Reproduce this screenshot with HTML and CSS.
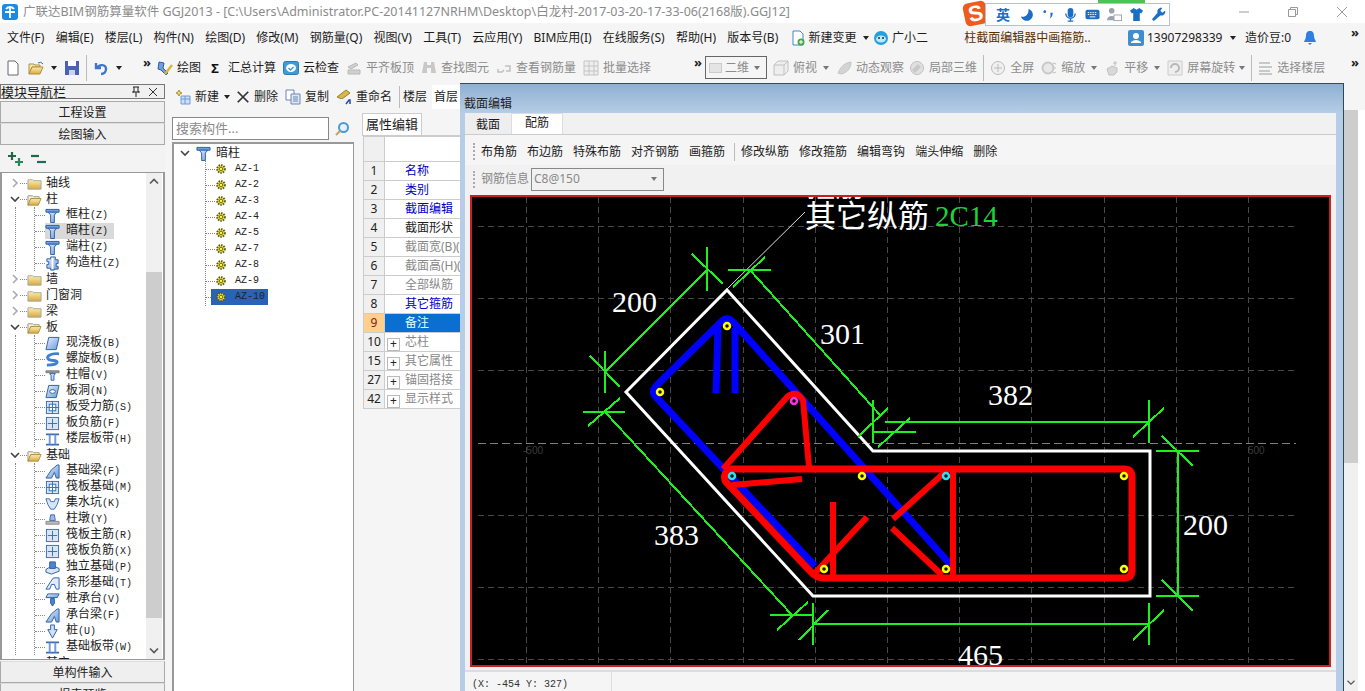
FILE: index.html
```html
<!DOCTYPE html>
<html lang="zh">
<head>
<meta charset="utf-8">
<title>广联达BIM钢筋算量软件 GGJ2013</title>
<link rel="stylesheet" href="styles.css">
</head>
<body>
<svg class="sprite" xmlns="http://www.w3.org/2000/svg">
  <defs>
    <linearGradient id="gf" x1="0" y1="0" x2="0" y2="1"><stop offset="0" stop-color="#fbeeb0"/><stop offset="1" stop-color="#d9a93f"/></linearGradient>
    <linearGradient id="gb" x1="0" y1="0" x2="1" y2="1"><stop offset="0" stop-color="#e6f0fb"/><stop offset="1" stop-color="#6d9ad6"/></linearGradient>
  </defs>
  <symbol id="chev-r" viewBox="0 0 10 10"><path d="M3 1l4 4-4 4" fill="none" stroke="#aaa" stroke-width="1.6"/></symbol>
  <symbol id="chev-d" viewBox="0 0 10 10"><path d="M1 3l4 4 4-4" fill="none" stroke="#444" stroke-width="1.6"/></symbol>
  <symbol id="folder" viewBox="0 0 16 16"><path d="M1 4h5l1 1h8v9H1z" fill="url(#gf)" stroke="#a8a8a0"/></symbol>
  <symbol id="folder-o" viewBox="0 0 16 16"><path d="M1 4h5l1 1h6v2H4l-3 7z" fill="#f4f0d8" stroke="#a09880"/><path d="M4 7h11l-3 7H1z" fill="url(#gf)" stroke="#b09040"/></symbol>
  <symbol id="col" viewBox="0 0 16 16"><path d="M1 1.500h14v3H1z" fill="#6f9fdc" stroke="#2a5ca8"/><path d="M3.500 4.500h9l-2.500 3v8H6v-8z" fill="url(#gb)" stroke="#2a5ca8"/></symbol>
  <symbol id="gz" viewBox="0 0 16 16"><path d="M6 1h5v3h3v4h-2v3h2v3h-4v1H6v-2H2V9h2V6H2V3h4z" fill="url(#gb)" stroke="#2a5ca8"/><path d="M8 2v12" stroke="#fff" stroke-width="2"/></symbol>
  <symbol id="slab" viewBox="0 0 16 16"><path d="M4 1.500h11L12 14.500H1z" fill="url(#gb)" stroke="#2a5ca8"/></symbol>
  <symbol id="spiral" viewBox="0 0 16 16"><path d="M15 2C6 1 0 5 4 8c3 2 9 0 9 3 0 2-6 3-11 3" fill="none" stroke="#3f7fd0" stroke-width="3"/></symbol>
  <symbol id="cap" viewBox="0 0 16 16"><path d="M1 3h14v2H1z" fill="#999" stroke="#777"/><path d="M5 6h6l-1.500 2v5h-3V8z" fill="#cfe0f5" stroke="#2a5ca8"/></symbol>
  <symbol id="hole" viewBox="0 0 16 16"><path d="M4 1.500h11L12 14.500H1z" fill="url(#gb)" stroke="#2a5ca8"/><ellipse cx="8" cy="8" rx="3" ry="2" fill="#fff" stroke="#2a5ca8"/></symbol>
  <symbol id="grid" viewBox="0 0 16 16"><rect x="1.500" y="1.500" width="13" height="13" fill="#d7e5f6" stroke="#3a6cb0"/><path d="M8 3v10M3 8h10" stroke="#3a6cb0"/></symbol>
  <symbol id="grid2" viewBox="0 0 16 16"><rect x="1.500" y="1.500" width="13" height="13" fill="#d7e5f6" stroke="#3a6cb0"/><rect x="4.500" y="4.500" width="7" height="7" fill="#fff" stroke="#3a6cb0"/><path d="M1 8h14M8 1v14" stroke="#3a6cb0"/></symbol>
  <symbol id="band" viewBox="0 0 16 16"><path d="M1 2.500h14M1 13.500h14" stroke="#3a6cb0" stroke-width="2"/><path d="M5 3v10M11 3v10" stroke="#6d9ad6" stroke-width="2"/></symbol>
  <symbol id="beam" viewBox="0 0 16 16"><path d="M1 15L7 6l6-5h2v14h-3l-2-6-3 6z" fill="url(#gb)" stroke="#2a5ca8"/></symbol>
  <symbol id="pit" viewBox="0 0 16 16"><path d="M1 3h4l1 3h4l1-3h4l-2 6-3 5H6L3 9z" fill="#d7e5f6" stroke="#3a6cb0"/></symbol>
  <symbol id="pier" viewBox="0 0 16 16"><path d="M6 3h4l1 6H5z" fill="#9dbce5" stroke="#3a6cb0"/><path d="M1 10h14v3H1z" fill="#bbb" stroke="#888"/></symbol>
  <symbol id="found" viewBox="0 0 16 16"><path d="M1 10l7-4 7 3v3l-8 3-6-2z" fill="#d7e5f6" stroke="#2a5ca8"/><path d="M5 2h6v7H5z" fill="#4f85cc" stroke="#2a5ca8"/></symbol>
  <symbol id="strip" viewBox="0 0 16 16"><path d="M1 14l5-8 3-4h6v12h-3l-2-5H7l-2 5z" fill="#e3edf9" stroke="#2a5ca8"/></symbol>
  <symbol id="pilecap" viewBox="0 0 16 16"><path d="M3 2h12l-2 4H1z" fill="url(#gb)" stroke="#2a5ca8"/><path d="M6 7h4v5l-2 3-2-3z" fill="#4f85cc" stroke="#2a5ca8"/></symbol>
  <symbol id="pile" viewBox="0 0 16 16"><path d="M6 1h4v5h3l-5 9-5-9h3z" fill="#cfe0f5" stroke="#2a5ca8"/></symbol>
  <symbol id="gear" viewBox="0 0 12 12"><circle cx="6" cy="6" r="3.800" fill="#fff23a" stroke="#5a5a20" stroke-width="2" stroke-dasharray="1.500 1"/><circle cx="6" cy="6" r="1.800" fill="#fff23a" stroke="#444" stroke-width=".8"/></symbol>
  <symbol id="t-new" viewBox="0 0 16 16"><path d="M3 1h7l3 3v11H3z" fill="#fff" stroke="#667"/></symbol>
  <symbol id="t-open" viewBox="0 0 16 16"><path d="M1 4h5l1 1h5v2H4l-3 7z" fill="#f5e6ad" stroke="#b09040"/><path d="M4 7h11l-3 7H1z" fill="url(#gf)" stroke="#b09040"/><path d="M10 3q3-2 5 1" fill="none" stroke="#3a6cb0"/></symbol>
  <symbol id="t-save" viewBox="0 0 16 16"><path d="M1 1h14v14H1z" fill="#4b61b4"/><path d="M4 1h8v5H4z" fill="#fff"/><path d="M5 10h6v5H5z" fill="#c9d2ef"/></symbol>
  <symbol id="t-undo" viewBox="0 0 16 16"><path d="M3 3v5h5M4 8c2-4 9-4 9 1 0 3-2 5-5 5" fill="none" stroke="#3f77c8" stroke-width="2.400"/></symbol>
  <symbol id="t-draw" viewBox="0 0 16 16"><path d="M2 2l5 1-1 5 5 5-2 2-5-5-3-1z" fill="#6f9fdc" stroke="#2a5ca8"/><path d="M15 5l-7 9" stroke="#d8b440" stroke-width="2.500"/></symbol>
  <symbol id="t-cloud" viewBox="0 0 16 16"><rect x="0.500" y="1.500" width="15" height="13" rx="2" fill="#3f9ad8" stroke="#2a7ab8"/><ellipse cx="8" cy="8" rx="5" ry="4" fill="#fff"/><path d="M5.500 8l2 2 3-3" fill="none" stroke="#3f9ad8" stroke-width="1.500"/></symbol>
  <symbol id="t-g1" viewBox="0 0 16 16"><path d="M2 7l8-4 2 2-7 4zM2 10h12v4H2z" fill="#d0d0d0" stroke="#b8b8b8"/></symbol>
  <symbol id="t-bino" viewBox="0 0 16 16"><path d="M3 2h3v3h4V2h3l2 11h-5V8H6v5H1z" fill="#c8c8c8"/></symbol>
  <symbol id="t-link" viewBox="0 0 16 16"><path d="M2 9v3h4l2-2M9 6h5v5h-4" fill="none" stroke="#c0c0c0" stroke-width="1.500"/></symbol>
  <symbol id="t-batch" viewBox="0 0 16 16"><path d="M1 1h14v14H1zM1 6h14M1 11h14M6 1v14M11 1v14" fill="#eee" stroke="#c4c4c4"/></symbol>
  <symbol id="t-cube" viewBox="0 0 16 16"><path d="M1 5l4-4h10v10l-4 4H1zM1 5h10v10M11 5l4-4" fill="#eee" stroke="#c0c0c0"/></symbol>
  <symbol id="t-orbit" viewBox="0 0 16 16"><path d="M2 13C5 6 9 3 15 2c0 6-4 11-10 12z" fill="#d4d4d4" stroke="#c4c4c4"/></symbol>
  <symbol id="t-3d" viewBox="0 0 16 16"><circle cx="8" cy="8" r="6.500" fill="#e0e0e0" stroke="#c0c0c0"/><path d="M3 10l6-6 3 3-6 6z" fill="#c8c8c8"/></symbol>
  <symbol id="t-zoom" viewBox="0 0 16 16"><circle cx="8" cy="8" r="6.500" fill="#f0f0f0" stroke="#bbb"/><path d="M8 4v8M4 8h8" stroke="#bbb"/></symbol>
  <symbol id="t-zoom2" viewBox="0 0 16 16"><circle cx="7" cy="8" r="5.500" fill="#e8e8e8" stroke="#c8c8c8" stroke-width="2"/><path d="M12 3l3 1M13 8h2M12 13l3-1" stroke="#c0c0c0"/></symbol>
  <symbol id="t-pan" viewBox="0 0 16 16"><path d="M3 9l5-3 5 2v4l-3 3H5zM11 1v5M9 3h4" fill="#d8d8d8" stroke="#c0c0c0"/></symbol>
  <symbol id="t-rot" viewBox="0 0 16 16"><path d="M1 1h14v14H1z" fill="#eee" stroke="#ccc"/><path d="M4 8a4 4 0 1 1 4 4" fill="none" stroke="#b8b8b8" stroke-width="2"/></symbol>
  <symbol id="t-layers" viewBox="0 0 16 16"><path d="M2 3h11M2 7h13M2 11h11M2 14h13" stroke="#c8c8c8" stroke-width="2"/></symbol>
  <symbol id="s-new" viewBox="0 0 16 16"><path d="M4 1l1 2 2 1-2 1-1 2-1-2-2-1 2-1z" fill="#f3d95a" stroke="#b09040"/><path d="M6 7h9v8H6z" fill="#cfe0f5" stroke="#6d9ad6"/><path d="M6 10h9M10 7v8" stroke="#6d9ad6"/></symbol>
  <symbol id="s-x" viewBox="0 0 16 16"><path d="M2 2l12 12M14 2L2 14" stroke="#333" stroke-width="2"/></symbol>
  <symbol id="s-copy" viewBox="0 0 16 16"><path d="M1 1h8v10H1z" fill="#fff" stroke="#6d88b0"/><path d="M6 5h9v10H6z" fill="#dbe7f5" stroke="#6d88b0"/><path d="M8 8h5M8 10h5M8 12h5" stroke="#6d88b0"/></symbol>
  <symbol id="s-ren" viewBox="0 0 16 16"><path d="M1 8l9-7 4 3-8 6z" fill="#d9b84a" stroke="#98802c"/><path d="M2 10h13v5H2z" fill="#eef3fa"/><path d="M10 15l3-4h1v4" fill="none" stroke="#2a4ca8" stroke-width="1.500"/></symbol>
  <symbol id="plus2" viewBox="0 0 18 16"><path d="M5 1v8M1 5h8" stroke="#23664a" stroke-width="2.200"/><path d="M12 7v8M8 11h8" stroke="#1f8a5a" stroke-width="2.200"/></symbol>
  <symbol id="minus2" viewBox="0 0 18 16"><path d="M1 5h8" stroke="#23664a" stroke-width="2.200"/><path d="M7 11h9" stroke="#1f6a5a" stroke-width="2.200"/></symbol>
</svg>

<header class="titlebar">
  <svg class="appicon" viewBox="0 0 16 16"><rect width="16" height="16" rx="3" fill="#1a8ae2"/><path d="M8 2v12M3 8h10M4 5a5 5 0 0 1 8 0" fill="none" stroke="#fff" stroke-width="1.800"/></svg>
  <span class="title-text">广联达BIM钢筋算量软件 GGJ2013 - [C:\Users\Administrator.PC-20141127NRHM\Desktop\白龙村-2017-03-20-17-33-06(2168版).GGJ12]</span>
  <div class="winbtns">
    <svg class="winbtn" viewBox="0 0 12 12"><path d="M1 6h10" stroke="#999"/></svg>
    <svg class="winbtn" viewBox="0 0 12 12"><path d="M1.500 3.500h7v7h-7zM3.500 3.500v-2h7v7h-2" fill="none" stroke="#999"/></svg>
    <svg class="winbtn" viewBox="0 0 12 12"><path d="M1 1l10 10M11 1L1 11" stroke="#999"/></svg>
  </div>
</header>

<nav class="menubar">
  <span>文件(F)</span><span>编辑(E)</span><span>楼层(L)</span><span>构件(N)</span><span>绘图(D)</span><span>修改(M)</span><span>钢筋量(Q)</span><span>视图(V)</span><span>工具(T)</span><span>云应用(Y)</span><span>BIM应用(I)</span><span>在线服务(S)</span><span>帮助(H)</span><span>版本号(B)</span>
  <span class="menu-ic"><svg class="ic16" viewBox="0 0 16 16"><path d="M3 1h7l3 3v11H3z" fill="#fff" stroke="#3a8ad0"/><circle cx="11" cy="12" r="3.500" fill="#45a845"/><path d="M11 10v4M9 12h4" stroke="#fff"/></svg>新建变更</span>
  <span class="caret dark mc1"></span>
  <span class="menu-ic"><svg class="ic16" viewBox="0 0 16 16"><circle cx="8" cy="8" r="7" fill="#24a0de"/><ellipse cx="8" cy="9" rx="5" ry="3.500" fill="#bfe8fb"/><circle cx="6" cy="8" r="1" fill="#135"/><circle cx="10" cy="8" r="1" fill="#135"/></svg>广小二</span>
  <span class="news">柱截面编辑器中画箍筋..</span>
  <span class="menu-ic user"><svg class="ic16" viewBox="0 0 16 16"><rect width="16" height="16" rx="2" fill="#3f8fce"/><circle cx="8" cy="6" r="3" fill="#fff"/><path d="M3 13h10v-1q-5-4-10 0z" fill="#fff"/></svg>13907298339</span>
  <span class="caret dark mc2"></span>
  <span>造价豆:0</span>
  <svg class="ic16" viewBox="0 0 16 16"><path d="M8 1c3 0 4 2 4 5 0 3 2 5 2 6H2c0-1 2-3 2-6 0-3 1-5 4-5z" fill="#2f7fe0"/><path d="M6 13h4l-2 2z" fill="#2f7fe0"/></svg>
  <span class="more end">»</span>
</nav>

<div class="toolbar">
  <svg class="ic16 tight" viewBox="0 0 16 16"><use href="#t-new"/></svg>
  <svg class="ic16 tight" viewBox="0 0 16 16"><use href="#t-open"/></svg><span class="caret dark"></span>
  <svg class="ic16 tight" viewBox="0 0 16 16"><use href="#t-save"/></svg>
  <i class="sep"></i>
  <svg class="ic16 tight" viewBox="0 0 16 16"><use href="#t-undo"/></svg><span class="caret dark"></span>
  <span class="more mid">»</span>
  <span class="tb"><svg class="ic16"><use href="#t-draw"/></svg>绘图</span>
  <span class="tb sig"><b class="sigma">Σ</b>汇总计算</span>
  <span class="tb"><svg class="ic16"><use href="#t-cloud"/></svg>云检查</span>
  <span class="tb off"><svg class="ic16"><use href="#t-g1"/></svg>平齐板顶</span>
  <span class="tb off"><svg class="ic16"><use href="#t-bino"/></svg>查找图元</span>
  <span class="tb off"><svg class="ic16"><use href="#t-link"/></svg>查看钢筋量</span>
  <span class="tb off"><svg class="ic16"><use href="#t-batch"/></svg>批量选择</span>
  <span class="more far">»</span>
  <span class="combo2d"><i class="swatch"></i>二维<span class="caret"></span></span>
  <span class="tb off"><svg class="ic16"><use href="#t-cube"/></svg>俯视<span class="caret"></span></span>
  <span class="tb off"><svg class="ic16"><use href="#t-orbit"/></svg>动态观察</span>
  <span class="tb off nudge"><svg class="ic16"><use href="#t-3d"/></svg>局部三维</span>
  <i class="sep"></i>
  <span class="tb off"><svg class="ic16"><use href="#t-zoom"/></svg>全屏</span>
  <span class="tb off"><svg class="ic16"><use href="#t-zoom2"/></svg>缩放<span class="caret"></span></span>
  <span class="tb off"><svg class="ic16"><use href="#t-pan"/></svg>平移<span class="caret"></span></span>
  <span class="tb off"><svg class="ic16"><use href="#t-rot"/></svg>屏幕旋转<span class="caret narrow"></span></span>
  <i class="sep"></i>
  <span class="tb off nudge1"><svg class="ic16"><use href="#t-layers"/></svg>选择楼层</span>
  <span class="more end">»</span>
</div>

<main class="workspace">
  <aside class="navpane">
    <div class="navhead"><span>模块导航栏</span><svg class="navhead-ic" viewBox="0 0 12 12"><path d="M3 1h6M4 1v5H2.500h7H8V1M6 6v5" fill="none" stroke="#222"/></svg><svg class="navhead-ic" viewBox="0 0 12 12"><path d="M2 2l8 8M10 2l-8 8" stroke="#333"/></svg></div>
    <div class="navbtn first">工程设置</div>
    <div class="navbtn">绘图输入</div>
    <div class="navtools"><svg class="plusm"><use href="#plus2"/></svg><svg class="plusm"><use href="#minus2"/></svg></div>
    <div class="navtree">
      <div class="treescroll">
        <div class="r"><svg class="chev"><use href="#chev-r"/></svg><i class="stub"></i><svg class="ic15"><use href="#folder"/></svg><span class="lb">轴线</span></div>
        <div class="r"><svg class="chev"><use href="#chev-d"/></svg><i class="stub"></i><svg class="ic15"><use href="#folder-o"/></svg><span class="lb">柱</span></div>
        <div class="grp"><div class="kids">
          <div class="k"><i class="kstub"></i><svg class="ic15"><use href="#col"/></svg><span class="kl">框柱<span class="l">(Z)</span></span></div>
          <div class="k"><i class="kstub"></i><span class="hitw"><svg class="ic15"><use href="#col"/></svg><span class="kl">暗柱<span class="l">(Z)</span></span></span></div>
          <div class="k"><i class="kstub"></i><svg class="ic15"><use href="#col"/></svg><span class="kl">端柱<span class="l">(Z)</span></span></div>
          <div class="k"><i class="kstub"></i><svg class="ic15"><use href="#gz"/></svg><span class="kl">构造柱<span class="l">(Z)</span></span></div>
        </div></div>
        <div class="r"><svg class="chev"><use href="#chev-r"/></svg><i class="stub"></i><svg class="ic15"><use href="#folder"/></svg><span class="lb">墙</span></div>
        <div class="r"><svg class="chev"><use href="#chev-r"/></svg><i class="stub"></i><svg class="ic15"><use href="#folder"/></svg><span class="lb">门窗洞</span></div>
        <div class="r"><svg class="chev"><use href="#chev-r"/></svg><i class="stub"></i><svg class="ic15"><use href="#folder"/></svg><span class="lb">梁</span></div>
        <div class="r"><svg class="chev"><use href="#chev-d"/></svg><i class="stub"></i><svg class="ic15"><use href="#folder-o"/></svg><span class="lb">板</span></div>
        <div class="grp"><div class="kids">
          <div class="k"><i class="kstub"></i><svg class="ic15"><use href="#slab"/></svg><span class="kl">现浇板<span class="l">(B)</span></span></div>
          <div class="k"><i class="kstub"></i><svg class="ic15"><use href="#spiral"/></svg><span class="kl">螺旋板<span class="l">(B)</span></span></div>
          <div class="k"><i class="kstub"></i><svg class="ic15"><use href="#cap"/></svg><span class="kl">柱帽<span class="l">(V)</span></span></div>
          <div class="k"><i class="kstub"></i><svg class="ic15"><use href="#hole"/></svg><span class="kl">板洞<span class="l">(N)</span></span></div>
          <div class="k"><i class="kstub"></i><svg class="ic15"><use href="#grid2"/></svg><span class="kl">板受力筋<span class="l">(S)</span></span></div>
          <div class="k"><i class="kstub"></i><svg class="ic15"><use href="#grid"/></svg><span class="kl">板负筋<span class="l">(F)</span></span></div>
          <div class="k"><i class="kstub"></i><svg class="ic15"><use href="#band"/></svg><span class="kl">楼层板带<span class="l">(H)</span></span></div>
        </div></div>
        <div class="r"><svg class="chev"><use href="#chev-d"/></svg><i class="stub"></i><svg class="ic15"><use href="#folder-o"/></svg><span class="lb">基础</span></div>
        <div class="grp"><div class="kids">
          <div class="k"><i class="kstub"></i><svg class="ic15"><use href="#beam"/></svg><span class="kl">基础梁<span class="l">(F)</span></span></div>
          <div class="k"><i class="kstub"></i><svg class="ic15"><use href="#grid2"/></svg><span class="kl">筏板基础<span class="l">(M)</span></span></div>
          <div class="k"><i class="kstub"></i><svg class="ic15"><use href="#pit"/></svg><span class="kl">集水坑<span class="l">(K)</span></span></div>
          <div class="k"><i class="kstub"></i><svg class="ic15"><use href="#pier"/></svg><span class="kl">柱墩<span class="l">(Y)</span></span></div>
          <div class="k"><i class="kstub"></i><svg class="ic15"><use href="#grid"/></svg><span class="kl">筏板主筋<span class="l">(R)</span></span></div>
          <div class="k"><i class="kstub"></i><svg class="ic15"><use href="#grid"/></svg><span class="kl">筏板负筋<span class="l">(X)</span></span></div>
          <div class="k"><i class="kstub"></i><svg class="ic15"><use href="#found"/></svg><span class="kl">独立基础<span class="l">(P)</span></span></div>
          <div class="k"><i class="kstub"></i><svg class="ic15"><use href="#strip"/></svg><span class="kl">条形基础<span class="l">(T)</span></span></div>
          <div class="k"><i class="kstub"></i><svg class="ic15"><use href="#pilecap"/></svg><span class="kl">桩承台<span class="l">(V)</span></span></div>
          <div class="k"><i class="kstub"></i><svg class="ic15"><use href="#beam"/></svg><span class="kl">承台梁<span class="l">(F)</span></span></div>
          <div class="k"><i class="kstub"></i><svg class="ic15"><use href="#pile"/></svg><span class="kl">桩<span class="l">(U)</span></span></div>
          <div class="k"><i class="kstub"></i><svg class="ic15"><use href="#band"/></svg><span class="kl">基础板带<span class="l">(W)</span></span></div>
        </div></div>
        <div class="r"><svg class="chev"><use href="#chev-r"/></svg><i class="stub"></i><svg class="ic15"><use href="#folder"/></svg><span class="lb">其它</span></div>
      </div>
      <div class="vbar">
        <svg class="vbar-arrow" viewBox="0 0 16 16"><path d="M4 10l4-4 4 4" fill="none" stroke="#555" stroke-width="1.600"/></svg>
        <div class="vbar-gap"></div>
        <div class="vbar-thumb"></div>
        <div class="vbar-rest"></div>
        <svg class="vbar-arrow" viewBox="0 0 16 16"><path d="M4 6l4 4 4-4" fill="none" stroke="#555" stroke-width="1.600"/></svg>
      </div>
    </div>
    <div class="navbtn bottom">单构件输入</div>
    <div class="navbtn">报表预览</div>
  </aside>

  <section class="panel">
    <div class="subtools">
      <span class="tb"><svg class="ic16"><use href="#s-new"/></svg>新建</span><span class="caret dark tightcaret"></span>
      <span class="tb gapx"><svg class="ic16 ic-x"><use href="#s-x"/></svg>删除</span>
      <span class="tb"><svg class="ic16"><use href="#s-copy"/></svg>复制</span>
      <span class="tb"><svg class="ic16"><use href="#s-ren"/></svg>重命名</span>
      <i class="sep short"></i>
      <span>楼层</span>
      <span class="floor">首层</span>
    </div>
    <div class="panel-body">
      <div class="listcol">
        <div class="searchrow">
          <div class="searchbox">搜索构件...</div>
          <svg class="searchic" viewBox="0 0 16 16"><circle cx="9.500" cy="6.500" r="4.500" fill="#e6f2fb" stroke="#4a9ad4" stroke-width="2"/><path d="M6 10l-4 4" stroke="#c9a560" stroke-width="2.200"/></svg>
        </div>
        <div class="comptree">
          <div class="croot"><svg class="chev"><use href="#chev-d"/></svg><svg class="ic15 crooticon"><use href="#col"/></svg><span>暗柱</span></div>
          <div class="ckids">
            <div class="c"><i class="cstub"></i><svg class="gearic"><use href="#gear"/></svg><span class="cl">AZ-1</span></div>
            <div class="c"><i class="cstub"></i><svg class="gearic"><use href="#gear"/></svg><span class="cl">AZ-2</span></div>
            <div class="c"><i class="cstub"></i><svg class="gearic"><use href="#gear"/></svg><span class="cl">AZ-3</span></div>
            <div class="c"><i class="cstub"></i><svg class="gearic"><use href="#gear"/></svg><span class="cl">AZ-4</span></div>
            <div class="c"><i class="cstub"></i><svg class="gearic"><use href="#gear"/></svg><span class="cl">AZ-5</span></div>
            <div class="c"><i class="cstub"></i><svg class="gearic"><use href="#gear"/></svg><span class="cl">AZ-7</span></div>
            <div class="c"><i class="cstub"></i><svg class="gearic"><use href="#gear"/></svg><span class="cl">AZ-8</span></div>
            <div class="c"><i class="cstub"></i><svg class="gearic"><use href="#gear"/></svg><span class="cl">AZ-9</span></div>
            <div class="c sel"><i class="cstub"></i><div class="selbox"><svg class="gearic"><use href="#gear"/></svg><span class="cl">AZ-10</span></div></div>
          </div>
        </div>
      </div>
      <div class="propcol">
        <div class="proptab"><span class="tabon">属性编辑</span></div>
        <table class="prop">
          <tr class="phead"><th></th><td></td></tr>
          <tr><th>1</th><td class="blue">名称</td></tr>
          <tr><th>2</th><td class="blue">类别</td></tr>
          <tr><th>3</th><td class="blue">截面编辑</td></tr>
          <tr><th>4</th><td>截面形状</td></tr>
          <tr><th>5</th><td class="grey">截面宽(B)(mm)</td></tr>
          <tr><th>6</th><td class="grey">截面高(H)(mm)</td></tr>
          <tr><th>7</th><td class="grey">全部纵筋</td></tr>
          <tr><th>8</th><td class="blue">其它箍筋</td></tr>
          <tr class="cur"><th>9</th><td>备注</td></tr>
          <tr><th>10</th><td class="grey pl"><i class="plus">+</i>芯柱</td></tr>
          <tr><th>15</th><td class="grey pl"><i class="plus">+</i>其它属性</td></tr>
          <tr><th>27</th><td class="grey pl"><i class="plus">+</i>锚固搭接</td></tr>
          <tr><th>42</th><td class="grey pl"><i class="plus">+</i>显示样式</td></tr>
        </table>
      </div>
      <div class="rightstrip">
        <div class="rs-thumb"></div>
        <div class="rs-rest"></div>
        <svg class="rs-arrow" viewBox="0 0 16 16"><path d="M4 6l4 4 4-4" fill="none" stroke="#555" stroke-width="1.400"/></svg>
      </div>
    </div>
  </section>
</main>

<section class="dialog">
  <div class="dlg-title">截面编辑</div>
  <div class="dlg-body">
    <div class="tabs"><span class="t">截面</span><span class="t active">配筋</span></div>
    <div class="dlg-tools">
      <i class="grip"></i>
      <span>布角筋</span><span>布边筋</span><span>特殊布筋</span><span>对齐钢筋</span><span>画箍筋</span>
      <i class="sep tall"></i>
      <span>修改纵筋</span><span>修改箍筋</span><span>编辑弯钩</span><span>端头伸缩</span><span>删除</span>
    </div>
    <div class="dlg-tools second">
      <i class="grip"></i>
      <span class="greyl">钢筋信息</span>
      <span class="combo">C8@150<span class="caret"></span></span>
    </div>
    <div class="canvas">
      <svg class="cad" viewBox="472 197 857 468" xmlns="http://www.w3.org/2000/svg">
        <path class="gridl" d="M526 197V665M598 197V665M670 197V665M743 197V665M815 197V665M887 197V665M959 197V665M1031 197V665M1104 197V665M1176 197V665M1248 197V665M478 226H1296M478 298H1296M478 370H1296M478 515H1296M478 587H1296M478 659H1296"/>
        <path class="gridm" d="M478 443H1296"/>
        <text class="gt" x="523" y="454">-500</text>
        <text class="gt" x="1248" y="454">500</text>

        <path class="wall" d="M727 290L873 451H1150V596H813L626 392Z"/>
        <path class="leader" d="M727 289L805 212"/>

        <path class="dim" d="M605 372L707 270M707 247V291M692 254L723 284M605 351V393M590 356L620 387"/>
        <path class="dim" d="M750 270L880 415M728 270H771M733 287L765 257M873 400V443M858 437L888 408"/>
        <path class="dim" d="M605 412L792 615M583 412H625M588 426L620 398M770 615H813M777 630L808 602"/>
        <path class="dim" d="M813 624H1149M813 603V645M799 640L828 610M1149 603V645M1133 640L1164 610"/>
        <path class="dim" d="M1178 451V596M1156 451H1199M1162 436L1193 466M1156 596H1199M1162 580L1193 611"/>
        <path class="dim" d="M885 422H1149M872 432H916M878 447L910 418M1149 400V443M1133 437L1164 408"/>

        <path class="blue-bar" d="M716 393L718 328M735 393V328M656 386L721 322Q727 316 733 322L950 564M656 386Q651 392 656 397L815 566"/>
        <path class="red-bar" d="M729 469H1124Q1132 469 1132 477V570Q1132 578 1124 578H824Q816 578 811 572L726 482Q722 476 729 469Z"/>
        <path class="red-hook" d="M732 485L802 479M723 469L787 397Q796 389 803 400L809 467"/>
        <path class="red-hook" d="M833 502V575M815 573L867 517M953 472V575M945 472L893 519M942 575L892 528"/>

        <circle class="dy" cx="727" cy="326" r="3"/>
        <circle class="dy" cx="660" cy="392" r="3"/>
        <circle class="dm" cx="794" cy="401" r="3"/>
        <circle class="dc" cx="732" cy="476" r="3"/>
        <circle class="dy" cx="862" cy="476" r="3"/>
        <circle class="dc" cx="946" cy="476" r="3"/>
        <circle class="dy" cx="1124" cy="476" r="3"/>
        <circle class="dy" cx="824" cy="569" r="3"/>
        <circle class="dy" cx="946" cy="569" r="3"/>
        <circle class="dy" cx="1124" cy="569" r="3"/>

        <text class="lbl" x="806" y="197">箍筋</text>
        <text class="lbl big" x="805" y="227">其它纵筋</text>
        <text class="lbl-g" x="935" y="226">2C14</text>
        <text class="num" x="612" y="312">200</text>
        <text class="num" x="820" y="344">301</text>
        <text class="num" x="988" y="405">382</text>
        <text class="num" x="1183" y="535">200</text>
        <text class="num" x="654" y="545">383</text>
        <text class="num" x="958" y="665">465</text>
      </svg>
    </div>
    <div class="statusbar"><span class="coord">(X: -454 Y: 327)</span><span class="stat2"></span></div>
  </div>
</section>

<div class="ime">
  <span class="ime-s">S</span>
  <div class="ime-bar">
    <b class="ime-en">英</b>
    <svg class="ime-ic" viewBox="0 0 16 16"><path d="M10 2a6.500 6.500 0 1 1-8 8c4 2 9-2 8-8z" fill="#1a6fc4"/></svg>
    <svg class="ime-ic" viewBox="0 0 16 16"><circle cx="4" cy="5" r="1.500" fill="#1a6fc4"/><path d="M10 6h2.500c0 3-1 5-3 6 .8-2 .8-3.500.5-6z" fill="#1a6fc4"/></svg>
    <svg class="ime-ic" viewBox="0 0 16 16"><rect x="5" y="1" width="6" height="10" rx="3" fill="#1a6fc4"/><path d="M3 7a5 5 0 0 0 10 0M8 12v3M5 15h6" fill="none" stroke="#1a6fc4" stroke-width="1.400"/></svg>
    <svg class="ime-ic" viewBox="0 0 16 16"><rect x="0.500" y="3" width="15" height="10" rx="2" fill="#1a6fc4"/><path d="M3 6h10M3 8h10" stroke="#fff" stroke-dasharray="1.500 1"/><path d="M5 10.500h6" stroke="#fff"/></svg>
    <svg class="ime-ic" viewBox="0 0 16 16"><circle cx="5" cy="4" r="3" fill="#9aa3ad"/><path d="M0 14c0-6 10-6 10 0z" fill="#9aa3ad"/><rect x="7.500" y="8.500" width="8" height="6" fill="#fff" stroke="#9aa3ad"/></svg>
    <svg class="ime-ic" viewBox="0 0 16 16"><path d="M5 1L1 4l2 3 1.500-1v9h7V6L13 7l2-3-4-3-3 2z" fill="#1a6fc4"/></svg>
    <svg class="ime-ic" viewBox="0 0 16 16"><path d="M15 4l-3 2-2-2 2-3c-3-1-6 2-5 5l-6 7 2 2 7-6c3 1 6-2 5-5z" fill="#1a6fc4"/></svg>
  </div>
  <i class="ime-green"></i>
</div>
</body>
</html>
```
FILE: styles.css
```css
* { box-sizing: border-box; }
html, body { margin: 0; padding: 0; }
body {
  width: 1365px; height: 691px; overflow: hidden; position: relative;
  background: #f5f5f5; color: #1c1c1c;
  font: 12px/16px "Noto Sans", "Noto Sans CJK SC", sans-serif;
}
i { font-style: normal; display: block; }
.sprite { position: absolute; width: 0; height: 0; }
.ic16 { width: 16px; height: 16px; flex: none; display: block; }
.ic15 { width: 15px; height: 15px; flex: none; display: block; }

.titlebar { height: 23px; background: #fff; display: flex; align-items: center; padding-left: 2px; }
.appicon { width: 16px; height: 16px; flex: none; }
.title-text { margin-left: 5px; color: #8b8b8b; font-size: 12.5px; white-space: nowrap; }
.winbtns { margin-left: auto; display: flex; gap: 37px; padding-right: 17px; align-items: center; }
.winbtn { width: 12px; height: 12px; display: block; }

.menubar { height: 30px; display: flex; align-items: center; padding-left: 7px; gap: 11.25px; white-space: nowrap; position: relative; }
.menu-ic { display: flex; align-items: center; gap: 3px; }
.mc1 { margin: 0 -7px 0 -5px; }
.mc2 { margin: 0 -2px 0 -4px; }
.news { color: #5a3000; margin-left: 25px; }
.user { margin-left: 26px; }
.caret { width: 0; height: 0; flex: none; display: inline-block; border: 3px solid transparent; border-top: 4px solid #777; border-bottom: 0; }
.caret.dark { border-top-color: #222; }
.more { font-weight: bold; font-size: 13px; line-height: 10px; align-self: flex-start; margin-top: 4px; color: #222; }
.more.end { position: absolute; left: 1351px; }

.toolbar { height: 31px; display: flex; align-items: center; padding: 0 0 2px 5px; gap: 7px; white-space: nowrap; position: relative; }
.sep { width: 1px; height: 26px; background: #bbb; flex: none; margin: 0 -1px; }
.sep.short { height: 22px; margin: 0 -4px 0 0; }
.sep.tall { height: 18px; margin: 0 -4px 0 -1px; }
.tb { display: flex; align-items: center; gap: 4px; flex: none; }
.tb .caret { margin-left: 2px; }
.tb .caret.narrow { margin-left: 0; }
.off { color: #8c8c8c; }
.sigma { font-size: 13px; width: 10px; margin-right: 4px; color: #111; text-align: center; }
.sig { margin-left: 2px; }
.nudge { margin-left: -2px; }
.nudge1 { margin-left: -1px; }
.more.mid { margin-left: 14px; margin-right: -1px; }
.more.far { margin-left: 36px; margin-right: -4px; }
.combo2d { width: 62px; height: 23px; border: 1px solid #666; display: flex; align-items: center; gap: 3px; padding-left: 3px; color: #8c8c8c; flex: none; background: #f5f5f5; margin-right: -1px; }
.swatch { width: 13px; height: 10px; background: #e4e4e4; border: 1px solid #ccc; }
.combo2d .caret { margin-left: 2px; }

.workspace { height: 607px; display: flex; }
.navpane { width: 165px; flex: none; display: flex; flex-direction: column; }
.navhead { height: 15px; border: 1px solid #777; display: flex; align-items: center; font-size: 13px; white-space: nowrap; background: #f0f0f0; margin-bottom: 2px; }
.navhead span { margin-right: auto; }
.navhead-ic { width: 12px; height: 12px; margin-right: 5px; flex: none; }
.navbtn { height: 22px; flex: none; background: #efefef; border: 1px solid #aaa; border-top-color: #ddd; display: flex; align-items: center; justify-content: center; color: #222; padding-top: 1px; }
.navbtn.first { border-top-color: #aaa; }
.navbtn.bottom { margin-top: 1px; }
.navtools { height: 27px; flex: none; display: flex; align-items: center; gap: 5px; padding-left: 7px; background: #f3f3f3; }
.plusm { width: 18px; height: 16px; display: block; }
.navtree { height: 488px; flex: none; display: flex; background: #fff; border: 1px solid #999; border-width: 1px 2px 1px 2px; overflow: hidden; }
.treescroll { flex: 1; overflow: hidden; padding-top: 2px; min-width: 0; }
.r { height: 16px; display: flex; align-items: center; padding-left: 8px; }
.chev { width: 10px; height: 10px; flex: none; }
.stub { width: 7px; flex: none; border-top: 1px dotted #888; }
.lb { margin-left: 4px; }
.grp { margin-left: 13px; border-left: 1px dotted #888; }
.kids { margin-left: 18px; border-left: 1px dotted #888; }
.k { height: 16px; display: flex; align-items: center; white-space: nowrap; }
.kstub { width: 10px; flex: none; border-top: 1px dotted #888; }
.kl { margin-left: 4px; padding: 0 2px; line-height: 16px; }
.hitw { display: flex; align-items: center; background: #d9d9d9; height: 16px; padding-right: 4px; }
.l { font-family: "Liberation Mono", monospace; font-size: 10px; color: #222; }
.vbar { width: 16px; flex: none; display: flex; flex-direction: column; background: #f0f0f0; margin-right: 1px; }
.vbar-arrow { width: 16px; height: 17px; flex: none; display: block; }
.vbar-gap { height: 82px; flex: none; }
.vbar-thumb { height: 346px; flex: none; background: #cdcdcd; }
.vbar-rest { flex: 1; }

.panel { flex: 1; margin-left: 7px; min-width: 0; display: flex; flex-direction: column; }
.subtools { height: 26px; flex: none; display: flex; align-items: center; gap: 7px; padding-left: 3px; white-space: nowrap; }
.ic-x { width: 14px; }
.tightcaret { margin-left: -2px; }
.gapx { margin-left: -1px; }
.floor { background: #fff; padding: 4px 6px 4px 2px; margin-left: -2px; }
.panel-body { flex: 1; display: flex; min-height: 0; }
.listcol { width: 182px; flex: none; display: flex; flex-direction: column; padding-top: 7px; }
.searchrow { height: 25px; flex: none; display: flex; align-items: flex-start; }
.searchbox { width: 157px; height: 23px; border: 1px solid #888; background: #fff; padding-left: 3px; line-height: 21px; color: #8a8a8a; font-size: 13px; }
.searchic { width: 16px; height: 16px; margin: 4px 0 0 5px; }
.comptree { flex: 1; background: #fff; border: 2px solid #999; border-bottom: 0; border-right: 1px solid #999; padding-top: 1px; }
.croot { height: 16px; display: flex; align-items: center; padding-left: 6px; }
.crooticon { margin-left: 6px; margin-right: 5px; }
.ckids { margin-left: 31px; border-left: 1px dotted #888; margin-top: 0; height: 145px; }
.c { height: 16px; display: flex; align-items: center; }
.cstub { width: 9px; flex: none; border-top: 1px dotted #888; }
.gearic { width: 12px; height: 12px; flex: none; display: block; }
.cl { margin-left: 8px; font-family: "Liberation Mono", monospace; font-size: 10px; color: #222; }
.selbox { display: flex; align-items: center; width: 57px; height: 16px; background: #2a62b8; padding-left: 4px; margin-left: -4px; }
.propcol { flex: 1; margin-left: 8px; min-width: 0; background: #f5f5f5; margin-top: 3px; }
.proptab { height: 23px; border-bottom: 1px solid #ccc; display: flex; }
.tabon { width: 60px; height: 22px; background: #fff; border: 1px solid #ccc; border-bottom: 0; display: block; text-align: center; line-height: 20px; font-size: 13px; }
.prop { border-collapse: collapse; margin-left: 1px; width: calc(100% - 1px); background: #fff; table-layout: fixed; }
.prop tr { height: 19px; }
.prop tr.phead { height: 25px; }
.prop th { width: 21px; background: #f0f0f0; border: 1px solid #ccc; font-weight: normal; padding: 0; color: #222; }
.prop td { border: 1px solid #ccc; padding: 0 0 0 20px; white-space: nowrap; overflow: hidden; line-height: 16px; }
.prop td.blue { color: #0000c8; }
.prop td.grey { color: #888; }
.prop td.pl { padding-left: 2px; }
.plus { display: inline-block; width: 13px; height: 13px; border: 1px solid #bbb; color: #222; line-height: 10px; text-align: center; margin-right: 5px; vertical-align: -2px; }
.cur th { background: #ffcf8c; color: #802020; }
.cur td { background: #0a6fd1; color: #dff; }
.rightstrip { width: 21px; flex: none; background: #fff; display: flex; flex-direction: column; margin-left: 0; }
.rs-thumb { height: 353px; background: #cdcdcd; flex: none; margin-right: 7px; }
.rs-rest { flex: 1; background: #f0f0f0; margin-right: 7px; }
.rs-arrow { width: 14px; height: 17px; display: block; background: #f0f0f0; }

.dialog { position: absolute; left: 460px; top: 83px; width: 884px; height: 608px; border-top: 1px solid #3c4a50; border-right: 1px solid #2c4a50; display: flex; flex-direction: column; background: #b5cde6; }
.dlg-title { height: 29px; flex: none; background: linear-gradient(#8fb0d2, #b5cde6); padding: 12px 0 0 4px; font-size: 12px; line-height: 16px; color: #222; }
.dlg-body { flex: 1; margin: 0 7px 0 5px; background: #f1f1f1; display: flex; flex-direction: column; min-height: 0; }
.tabs { height: 22px; flex: none; display: flex; border-bottom: 1px solid #ccc; background: #f1f1f1; }
.t { width: 47px; text-align: center; line-height: 24px; font-size: 12px; border-right: 1px solid #ddd; background: #eee; }
.t.active { width: 51px; background: #fff; line-height: 17px; border: 1px solid #ddd; border-bottom: 0; border-left: 0; }
.dlg-tools { height: 30px; flex: none; display: flex; align-items: center; gap: 10px; padding: 3px 0 0 8px; background: #f5f5f5; white-space: nowrap; }
.dlg-tools.second { height: 30px; gap: 2px; padding: 0 0 2px 8px; background: #f1f1f1; }
.grip { width: 1px; height: 17px; border-left: 2px dotted #aaa; margin-right: -4px; }
.dlg-tools.second .grip { margin-right: 4px; }
.greyl { color: #888; }
.combo { width: 133px; height: 23px; border: 1px solid #888; color: #888; display: flex; align-items: center; padding-left: 2px; justify-content: space-between; padding-right: 6px; background: #f1f1f1; }
.canvas { height: 472px; flex: none; margin: 0 5px; border: 2px solid #cc2020; background: #000; overflow: hidden; }
.cad { display: block; width: 857px; height: 468px; }
.statusbar { flex: 1; display: flex; border-top: 2px solid #ddd; margin-top: 3px; background: #f5f5f5; }
.coord { width: 147px; padding: 3px 0 0 7px; border-right: 1px solid #ddd; line-height: 20px; color: #333; font-family: "Liberation Mono", monospace; font-size: 10px; }
.stat2 { flex: 1; }

.gridl { stroke: #484848; stroke-width: 1; stroke-dasharray: 6 4; fill: none; shape-rendering: crispEdges; }
.gridm { stroke: #808080; stroke-width: 1; stroke-dasharray: 8 4; fill: none; shape-rendering: crispEdges; }
.gt { fill: #3c3c3c; font: 10px "Liberation Sans", sans-serif; }
.wall { fill: none; stroke: #fff; stroke-width: 3; }
.leader { stroke: #ddd; stroke-width: 1; fill: none; }
.dim { fill: none; stroke: #1ef01e; stroke-width: 2; shape-rendering: crispEdges; }
.blue-bar { fill: none; stroke: #0000ff; stroke-width: 7; }
.red-bar { fill: none; stroke: #ff0000; stroke-width: 7; }
.red-hook { fill: none; stroke: #ff0000; stroke-width: 6; }
.dy, .dm, .dc { fill: #111; stroke-width: 2.500; }
.dy { stroke: #ffff00; }
.dm { stroke: #ff33dd; }
.dc { stroke: #30e0f0; }
.lbl { fill: #fff; font: 29px "Noto Sans CJK SC", serif; }
.lbl.big { font-size: 31px; }
.lbl-g { fill: #1ed23c; font: 29px "Liberation Serif", serif; }
.num { fill: #fff; font: 30px "Liberation Serif", serif; }

.ime { position: absolute; left: 963px; top: 0; width: 207px; height: 28px; }
.ime-s { position: absolute; left: 1px; top: 2px; width: 23px; height: 23px; background: #ef5a1e; border-radius: 5px; transform: rotate(-12deg); color: #fff; font: bold 22px/23px "Liberation Sans", sans-serif; text-align: center; }
.ime-bar { position: absolute; left: 22px; top: 3px; width: 185px; height: 23px; background: #fff; border: 1px solid #b3c3d3; display: flex; align-items: center; padding-left: 10px; gap: 7px; }
.ime-en { color: #1a6fc4; font-size: 14px; width: 14px; margin-right: 2px; }
.ime-ic { width: 15px; height: 15px; flex: none; display: block; }
.ime-green { position: absolute; left: 135px; top: 0; width: 47px; height: 3px; background: #4cc455; }
```
